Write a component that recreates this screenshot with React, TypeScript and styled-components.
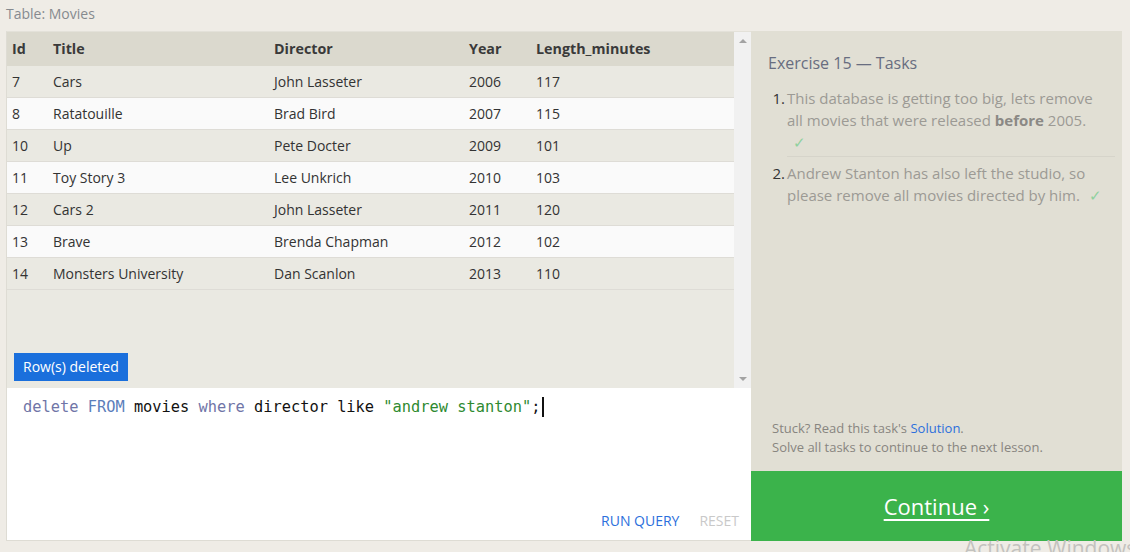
import React from "react";
import styled, { createGlobalStyle } from "styled-components";

const Global = createGlobalStyle`
  html, body { margin: 0; padding: 0; background: #efece6; }
  body { font-family: "Open Sans", "Noto Sans", sans-serif; }
  * { box-sizing: border-box; }
`;

const Page = styled.div`
  position: relative;
  width: 1130px;
  height: 552px;
  overflow: hidden;
  padding: 0 8px 0 6px;
  background: #efece6;
`;

const Caption = styled.div`
  height: 31px;
  line-height: 28px;
  font-size: 14px;
  color: #868a8f;
`;

const Workspace = styled.div`
  display: flex;
  height: 510px;
`;

const LeftColumn = styled.div`
  width: 745px;
  display: flex;
  flex-direction: column;
  border-left: 1px solid #dedcd4;
  border-top: 1px solid #e3e1d9;
  border-bottom: 1px solid #dedcd4;
`;

const ResultArea = styled.div`
  height: 356px;
  display: flex;
`;

const ResultScroll = styled.div`
  flex: 1;
  display: flex;
  flex-direction: column;
  background: #eae9e2;
`;

const Grid = styled.div`
  display: grid;
  grid-template-columns: 41px 221px 195px 67px 1fr;
`;

const HeadCell = styled.div`
  height: 34px;
  line-height: 34px;
  padding-left: 5px;
  background: #dbd9ce;
  font-size: 14.3px;
  font-weight: 700;
  color: #3a3a3a;
`;

const Cell = styled.div<{ $even: boolean }>`
  height: 32px;
  line-height: 31px;
  padding-left: 5px;
  background: ${(p) => (p.$even ? "#fafafa" : "#eae9e2")};
  border-bottom: 1px solid #dedcd6;
  font-size: 14px;
  color: #333;
  white-space: nowrap;
`;

const Badge = styled.div`
  margin: auto 0 7px 7px;
  align-self: flex-start;
  height: 28px;
  line-height: 28px;
  padding: 0 9px;
  background: #1a6fdc;
  color: #fff;
  font-size: 14px;
`;

const Scrollbar = styled.div`
  width: 17px;
  background: #f1f1f1;
  display: flex;
  flex-direction: column;
  justify-content: space-between;
  align-items: center;
  padding: 7px 0 7px;
`;

const Arrow = styled.div<{ $down?: boolean }>`
  width: 0;
  height: 0;
  border-left: 4px solid transparent;
  border-right: 4px solid transparent;
  ${(p) =>
    p.$down
      ? "border-top: 4px solid #a3a3a3;"
      : "border-bottom: 4px solid #a3a3a3;"}
`;

const Editor = styled.div`
  flex: 1;
  background: #fff;
  display: flex;
  flex-direction: column;
  justify-content: space-between;
`;

const CodeLine = styled.div`
  padding: 9px 16px 0;
  font-family: "DejaVu Sans Mono", "Liberation Mono", monospace;
  font-size: 15.35px;
  line-height: 20px;
  color: #111;
  white-space: pre;
  display: flex;
  align-items: center;
`;

const Tok = styled.span<{ $kind: "kw" | "op" | "str" | "plain" }>`
  color: ${(p) =>
    p.$kind === "kw"
      ? "#7075a7"
      : p.$kind === "op"
      ? "#5b7ebb"
      : p.$kind === "str"
      ? "#2e8a30"
      : "#111"};
`;

const Caret = styled.span`
  display: inline-block;
  width: 2px;
  height: 20px;
  background: #111;
  margin-left: 2px;
`;

const Actions = styled.div`
  display: flex;
  justify-content: flex-end;
  gap: 20px;
  padding: 0 12px 9px 0;
  font-size: 14px;
  line-height: 20px;
`;

const ActionLink = styled.span<{ $muted?: boolean }>`
  color: ${(p) => (p.$muted ? "#c9c9c9" : "#2c6fdc")};
`;

const RightPanel = styled.div`
  width: 371px;
  background: #e1dfd4;
  display: flex;
  flex-direction: column;
`;

const TaskBody = styled.div`
  flex: 1;
  padding: 21px 7px 0 17px;
  display: flex;
  flex-direction: column;
`;

const Title = styled.div`
  font-size: 16px;
  line-height: 22px;
  color: #686d80;
`;

const TaskList = styled.div`
  margin-top: 13px;
  display: flex;
  flex-direction: column;
`;

const Task = styled.div<{ $first?: boolean }>`
  display: flex;
  padding-top: ${(p) => (p.$first ? "0" : "5px")};
`;

const Num = styled.div`
  width: 19px;
  flex-shrink: 0;
  text-align: right;
  padding-right: 2px;
  font-size: 15px;
  line-height: 22px;
  color: #333;
`;

const TaskText = styled.div<{ $divider?: boolean }>`
  flex: 1;
  font-size: 15px;
  line-height: 22px;
  color: #9c9a94;
  padding-bottom: ${(p) => (p.$divider ? "3px" : "0")};
  border-bottom: ${(p) => (p.$divider ? "1px solid #d6d4ca" : "none")};
  b { color: #8b8985; }
`;

const Check = styled.span<{ $block?: boolean }>`
  color: #8fd19e;
  font-size: 15px;
  margin-left: ${(p) => (p.$block ? "6px" : "9px")};
  display: ${(p) => (p.$block ? "block" : "inline")};
`;

const Hint = styled.div`
  margin-top: auto;
  padding: 0 0 14px 4px;
  font-size: 13px;
  line-height: 19px;
  color: #888580;
`;

const HintLink = styled.span`
  color: #2c6fdc;
`;

const ContinueBar = styled.div`
  height: 70px;
  background: #3bb34b;
  display: flex;
  align-items: center;
  justify-content: center;
`;

const ContinueLink = styled.span`
  color: #fff;
  font-size: 22px;
  text-decoration: underline;
  text-underline-offset: 4px;
  text-decoration-thickness: 2px;
`;

const Watermark = styled.div`
  position: absolute;
  left: 964px;
  top: 534px;
  font-size: 21px;
  color: #c3c2be;
  white-space: nowrap;
`;

const rows: [number, string, string, number, number][] = [
  [7, "Cars", "John Lasseter", 2006, 117],
  [8, "Ratatouille", "Brad Bird", 2007, 115],
  [10, "Up", "Pete Docter", 2009, 101],
  [11, "Toy Story 3", "Lee Unkrich", 2010, 103],
  [12, "Cars 2", "John Lasseter", 2011, 120],
  [13, "Brave", "Brenda Chapman", 2012, 102],
  [14, "Monsters University", "Dan Scanlon", 2013, 110],
];

const headers = ["Id", "Title", "Director", "Year", "Length_minutes"];

export default function App() {
  return (
    <Page>
      <Global />
      <Caption>Table: Movies</Caption>
      <Workspace>
        <LeftColumn>
          <ResultArea>
            <ResultScroll>
              <Grid>
                {headers.map((h) => (
                  <HeadCell key={h}>{h}</HeadCell>
                ))}
                {rows.map((r, i) =>
                  r.map((v, j) => (
                    <Cell key={`${i}-${j}`} $even={i % 2 === 1}>
                      {v}
                    </Cell>
                  ))
                )}
              </Grid>
              <Badge>Row(s) deleted</Badge>
            </ResultScroll>
            <Scrollbar>
              <Arrow />
              <Arrow $down />
            </Scrollbar>
          </ResultArea>
          <Editor>
            <CodeLine>
              <Tok $kind="kw">delete</Tok>
              <Tok $kind="plain"> </Tok>
              <Tok $kind="op">FROM</Tok>
              <Tok $kind="plain"> movies </Tok>
              <Tok $kind="kw">where</Tok>
              <Tok $kind="plain"> director like </Tok>
              <Tok $kind="str">"andrew stanton"</Tok>
              <Tok $kind="plain">;</Tok>
              <Caret />
            </CodeLine>
            <Actions>
              <ActionLink>RUN QUERY</ActionLink>
              <ActionLink $muted>RESET</ActionLink>
            </Actions>
          </Editor>
        </LeftColumn>
        <RightPanel>
          <TaskBody>
            <Title>Exercise 15 — Tasks</Title>
            <TaskList>
              <Task $first>
                <Num>1.</Num>
                <TaskText $divider>
                  This database is getting too big, lets remove
                  <br />
                  all movies that were released <b>before</b> 2005.
                  <Check $block>✓</Check>
                </TaskText>
              </Task>
              <Task>
                <Num>2.</Num>
                <TaskText>
                  Andrew Stanton has also left the studio, so
                  <br />
                  please remove all movies directed by him.
                  <Check>✓</Check>
                </TaskText>
              </Task>
            </TaskList>
            <Hint>
              Stuck? Read this task's <HintLink>Solution</HintLink>.
              <br />
              Solve all tasks to continue to the next lesson.
            </Hint>
          </TaskBody>
          <ContinueBar>
            <ContinueLink>Continue ›</ContinueLink>
          </ContinueBar>
        </RightPanel>
      </Workspace>
      <Watermark>Activate Windows</Watermark>
    </Page>
  );
}
